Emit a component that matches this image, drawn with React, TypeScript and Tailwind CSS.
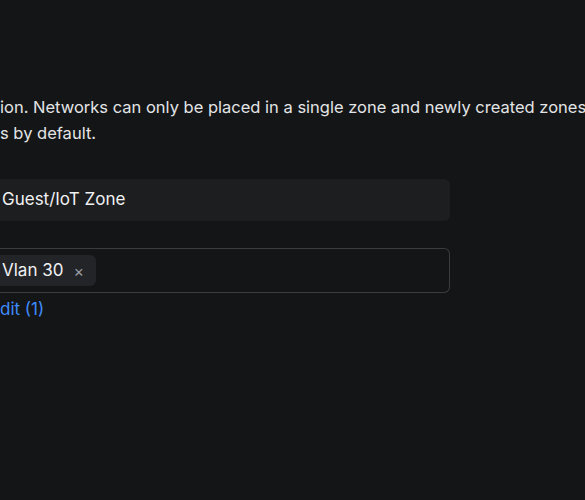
import React from "react";

export default function App() {
  return (
    <div className="w-[585px] h-[500px] bg-[#141517] overflow-hidden text-[#e3e4e6]" style={{ fontFamily: 'Inter, "Noto Sans", sans-serif' }}>
      <div className="pt-[94px]">
        <div className="text-[16.5px] leading-[26px] whitespace-nowrap">
          <div>ion. Networks can only be placed in a single zone and newly created zones will</div>
          <div>s by default.</div>
        </div>
        <div className="mt-[33px] w-[450px] h-[42px] bg-[#1d1e20] rounded-r-md flex items-center pl-[2px] text-[17px] text-[#f0f1f3]">
          Guest/IoT Zone
        </div>
        <div className="mt-[27px] w-[450px] h-[45px] border border-l-0 border-[#3b3c3f] rounded-r-md flex items-center">
          <div className="h-[31px] w-[96px] bg-[#232427] rounded-r-md flex items-center pl-[2px] text-[17px] text-[#f0f1f3]">
            <span>Vlan 30</span>
            <span className="ml-[10px] text-[#9a9ca0] text-[16px]">×</span>
          </div>
        </div>
        <div className="mt-[4px] text-[17px] leading-[24px] text-[#3f8cfb]">dit (1)</div>
      </div>
    </div>
  );
}
